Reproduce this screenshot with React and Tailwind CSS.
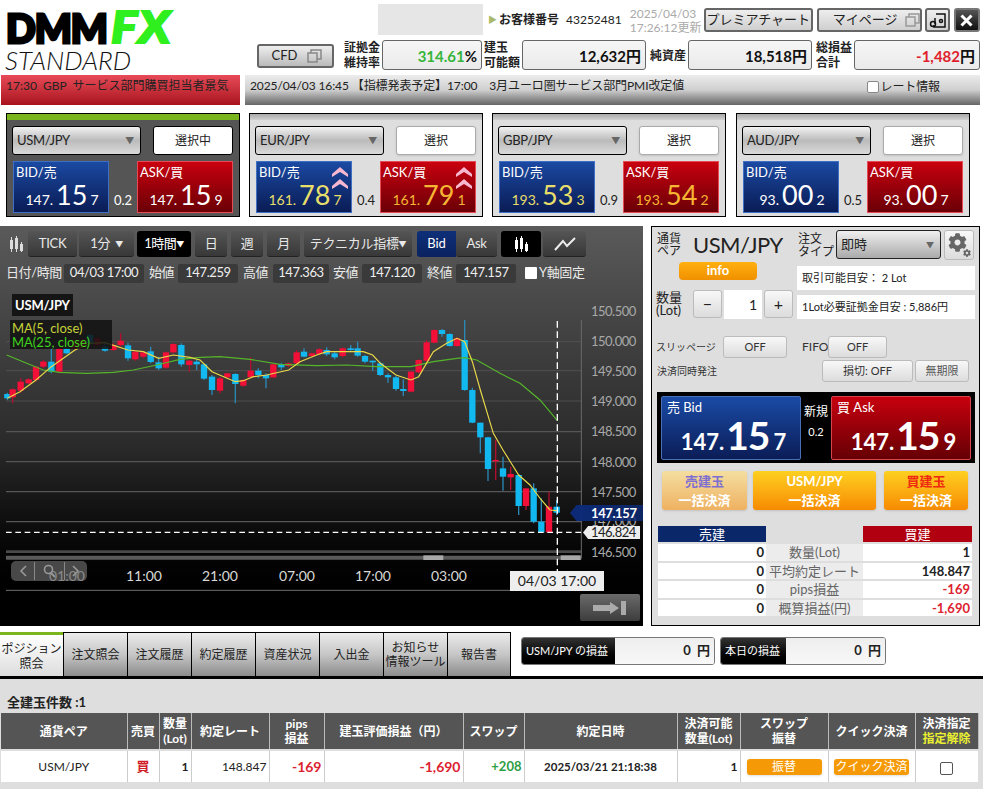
import React from "react";
import { FaCog } from "react-icons/fa";

const FONT = "[font-family:Lato,'Noto_Sans_CJK_JP',sans-serif]";

const candles = [
  [22,218,222,235,240,0],[38,205,208,232,250,1],[62,175,185,212,218,1],[86,175,178,190,192,1],[108,138,140,180,185,1],[130,120,125,140,145,1],
  [154,85,125,155,160,0],[178,80,85,155,160,1],[200,80,85,100,102,0],[225,55,60,85,90,1],[248,55,60,80,85,1],[270,40,45,70,75,0],[292,50,55,75,80,1],
  [315,70,80,92,95,0],[340,70,75,90,92,1],[362,40,62,75,80,1],[384,68,76,115,122,0],[406,92,95,118,122,1],[430,95,97,110,115,1],[452,80,94,126,130,0],
  [476,110,127,145,150,0],[498,95,97,143,146,1],[520,70,72,97,100,1],[544,70,75,133,140,0],[568,120,122,135,155,1],[590,120,125,133,150,0],
  [612,130,133,176,180,0],[636,165,170,210,225,0],[660,170,175,212,220,1],[682,158,160,172,178,1],[706,160,162,192,250,0],[730,178,180,197,200,1],
  [752,112,152,172,175,1],[775,145,152,165,175,0],[798,160,165,175,205,0],[820,130,133,172,175,1],[844,128,132,142,150,0],[866,128,130,138,142,1],
  [890,90,97,130,132,1],[912,85,95,110,112,0],[936,98,100,108,112,1],[958,85,88,102,106,1],[980,82,90,103,108,0],[1004,95,100,112,118,0],
  [1028,82,85,108,112,1],[1052,75,85,90,92,0],[1073,65,85,107,110,0],[1095,105,108,125,130,0],[1118,122,122,127,152,0],[1141,125,130,165,168,0],
  [1164,160,165,172,188,0],[1188,168,172,207,212,0],[1210,178,207,213,228,0],[1233,152,155,215,217,1],[1256,118,120,157,160,1],[1280,60,67,122,125,1],
  [1303,28,30,68,70,1],[1326,27,30,42,50,0],[1349,40,42,78,80,0],[1371,52,55,78,80,1],[1394,-20,60,210,212,0],[1417,203,210,308,310,0],
  [1441,308,308,352,400,0],[1464,350,352,447,483,0],[1487,360,420,424,480,1],[1509,410,445,470,512,0],[1532,440,462,472,510,1],[1556,462,465,558,585,0],
  [1578,505,505,558,570,1],[1601,490,505,605,610,0],[1624,535,605,637,637,0],[1647,515,560,637,637,1],[1670,540,560,578,585,0],
];
const ma5 = "22,235 60,215 108,180 154,140 190,115 225,90 270,70 315,68 384,90 430,95 476,115 520,105 570,112 600,120 636,155 706,185 730,182 760,170 800,165 866,150 900,125 950,105 980,95 1040,95 1090,95 1118,105 1141,130 1188,165 1233,180 1256,170 1300,95 1340,70 1371,55 1394,65 1417,125 1441,210 1480,340 1509,390 1556,465 1590,495 1624,540 1650,570 1670,572";
const ma25 = "20,105 80,130 130,150 178,157 260,160 340,157 400,150 470,135 540,118 600,112 660,110 750,118 840,133 950,137 1040,135 1130,140 1233,140 1300,125 1371,115 1394,113 1430,120 1500,160 1560,190 1620,240 1672,302";

function Chart() {
  return (
    <svg className="absolute left-0 top-[94px]" width="660" height="310" viewBox="0 0 1980 930">
      {[65,152,243,335,425,515,605].map((y) => (
        <line key={y} x1="18" x2="1744" y1={y} y2={y} stroke="#565656" strokeWidth={y > 300 ? 4 : 2.5} />
      ))}
      <line x1="18" x2="1744" y1="695" y2="695" stroke="#4a4a4a" strokeWidth="8" />
      <line x1="18" x2="1744" y1="713" y2="713" stroke="#5a5a5a" strokeWidth="12" />
      <rect x="1270" y="706" width="60" height="14" fill="#a8a8a8" />
      <rect x="1682" y="706" width="60" height="14" fill="#a8a8a8" />
      <line x1="1744" x2="1744" y1="-70" y2="715" stroke="#6a6a6a" strokeWidth="3" />
      <line x1="18" x2="1770" y1="811" y2="811" stroke="#6e6e6e" strokeWidth="3" />
      {candles.map(([x, h, t, b, l, up]) => (
        <g key={x}>
          <line x1={x} x2={x} y1={h} y2={l} stroke={up ? "#b0102e" : "#2b89b8"} strokeWidth="4" />
          <rect x={x - 9.5} y={t} width="19" height={b - t} fill={up ? "#f20f38" : "#12b8f0"} />
        </g>
      ))}
      <polyline points={ma25} fill="none" stroke="#55b52a" strokeWidth="3.5" />
      <polyline points={ma5} fill="none" stroke="#e8d84a" strokeWidth="3.5" />
      <line x1="18" x2="1744" y1="637" y2="637" stroke="#fff" strokeWidth="4" strokeDasharray="17 11" />
      <line x1="1672" x2="1672" y1="-90" y2="755" stroke="#fff" strokeWidth="4" strokeDasharray="20 11" />
    </svg>
  );
}

function Price({ side, label, a, b, c, hi, up }) {
  const blue = side === "bid";
  return (
    <div className={`relative w-[96px] h-[52px] border ${blue ? "border-[#3f6fc4] bg-gradient-to-b from-[#1b4aa3] to-[#0a1c55]" : "border-[#e64a55] bg-gradient-to-b from-[#c9000f] to-[#6b0006]"}`}>
      <div className="pl-[2px] pt-[1px] text-[13px] leading-[18px] text-white">{label}</div>
      <div className={`flex items-baseline justify-center h-[26px] leading-[26px] mt-[1px] pl-[2px] ${hi ? (blue ? "text-[#e8de6a]" : "text-[#f6b533]") : "text-white"}`}>
        <span className="text-[14px]">{a}</span>
        <span className="text-[27px] mx-[3px]">{b}</span>
        <span className="text-[14px]">{c}</span>
      </div>
      {up && (
        <svg className="absolute right-[3px] top-[4px]" width="16" height="24" viewBox="0 0 16 24">
          <path d="M8 1 L16 8 L16 11 L8 6 L0 11 L0 8Z M8 13 L16 20 L16 23 L8 18 L0 23 L0 20Z" fill="#f7b7cf" />
        </svg>
      )}
    </div>
  );
}

function RateCard({ pair, active, hi, up, bid, ask, spread, ml, sel }) {
  return (
    <div className={`w-[234px] h-[104px] border border-black ${ml} ${active ? "bg-[#555]" : "bg-[#dedede]"}`}>
      <div className={active ? "h-[6px] bg-[#7ab51d]" : "h-[6px] bg-gradient-to-b from-[#a8a8a8] to-[#d0d0d0]"}></div>
      <div className="flex justify-between pl-[5px] pr-[6px] mt-[6px]">
        <div className="w-[129px] h-[29px] rounded-[3px] border border-black bg-gradient-to-b from-[#f2f2f2] via-[#bbb] to-[#dadada] flex items-center justify-between pl-[4px] pr-[6px] text-[13px] tracking-[-0.3px] text-[#222]">
          <span>{pair}</span>
          <span className="text-[#666] text-[9px]">▼</span>
        </div>
        <div className={`w-[80px] h-[29px] rounded-[3px] bg-white flex items-center justify-center text-[12px] text-[#222] ${active ? "border border-black" : "border border-[#aaa] shadow-sm"}`}>{sel}</div>
      </div>
      <div className={`flex justify-between pl-[6px] pr-[6px] mt-[6px] ${active ? "text-white" : "text-[#222]"}`}>
        <Price side="bid" label="BID/売" hi={hi} up={up} {...bid} />
        <span className="self-end text-[13px] leading-[26px]">{spread}</span>
        <Price side="ask" label="ASK/買" hi={hi} up={up} {...ask} />
      </div>
    </div>
  );
}

function InfoBox({ w, value, red, green, ml }) {
  return (
    <div className={`${w} ${ml} h-[30px] rounded-[3px] border border-[#666] bg-gradient-to-b from-[#f6f6f6] to-[#eaeaea] flex items-center justify-end pr-[4px] pt-[3px] text-[15px] font-bold text-[#111]`}>
      <span className={red ? "text-[#e01f2d]" : green ? "text-[#35b53a]" : ""}>{value}</span>
      <span>{green ? "%" : "円"}</span>
    </div>
  );
}

function Label({ l1, l2, w }) {
  return (
    <div className={`${w} text-[12px] leading-[15px] font-bold text-[#222] flex flex-col justify-center`}>
      <span>{l1}</span>
      {l2 && <span>{l2}</span>}
    </div>
  );
}

const DARK_BTN = "h-[26px] rounded-[3px] bg-gradient-to-b from-[#555] to-[#383838] border-b border-[#222] text-[#e8e8e8] flex items-center justify-center text-[13px] tracking-[-0.3px]";

function CandleIcon({ c = "#ddd" }) {
  return (
    <svg width="16" height="16" viewBox="0 0 16 16">
      <rect x="2" y="4" width="3" height="9" fill={c} /><rect x="3" y="1" width="1" height="15" fill={c} />
      <rect x="7" y="2" width="3" height="11" fill={c} /><rect x="8" y="0" width="1" height="16" fill={c} />
      <rect x="12" y="8" width="3" height="7" fill={c} /><rect x="13" y="6" width="1" height="10" fill={c} />
    </svg>
  );
}

function Toolbar() {
  return (
    <div className="flex items-center pl-[8px] pt-[5px] h-[31px]">
      <span className="w-[20px]"><CandleIcon /></span>
      <div className={`${DARK_BTN} w-[49px]`}>TICK</div>
      <div className={`${DARK_BTN} w-[55px] ml-[2px]`}>1分&nbsp;<span className="text-[8px] ml-[2px]">▼</span></div>
      <div className="h-[26px] w-[54px] ml-[3px] rounded-[3px] bg-black text-white flex items-center justify-center text-[13px] tracking-[-0.5px]">1時間<span className="text-[8px]">▼</span></div>
      <div className={`${DARK_BTN} w-[32px] ml-[4px]`}>日</div>
      <div className={`${DARK_BTN} w-[32px] ml-[4px]`}>週</div>
      <div className={`${DARK_BTN} w-[33px] ml-[4px]`}>月</div>
      <div className={`${DARK_BTN} w-[108px] ml-[4px]`}>テクニカル指標<span className="text-[8px]">▼</span></div>
      <div className="h-[26px] w-[39px] ml-[5px] rounded-l-[3px] bg-gradient-to-b from-[#0e2f78] to-[#0a2260] text-white flex items-center justify-center text-[13px]">Bid</div>
      <div className={`${DARK_BTN} w-[41px]`}>Ask</div>
      <div className="h-[26px] w-[40px] ml-[4px] rounded-[3px] bg-black flex items-center justify-center"><CandleIcon c="#fff" /></div>
      <div className={`${DARK_BTN} w-[43px] ml-[2px]`}>
        <svg width="22" height="14" viewBox="0 0 22 14"><path d="M1 13 L9 4 L13 9 L21 1" fill="none" stroke="#eee" strokeWidth="2" /></svg>
      </div>
    </div>
  );
}

function Ohlc() {
  const box = "h-[19px] rounded-[2px] bg-[#3a3a3a] text-[#eee] flex items-center justify-center text-[13px] tracking-[-0.4px]";
  const lab = "text-[13px] text-[#e8e8e8] tracking-[-0.4px]";
  return (
    <div className="flex items-center h-[20px] mt-[6px] pl-[6px]">
      <span className={`${lab} w-[58px]`}>日付/時間</span>
      <div className={`${box} w-[80px]`}>04/03 17:00</div>
      <span className={`${lab} w-[29px] ml-[5px]`}>始値</span>
      <div className={`${box} w-[60px]`}>147.259</div>
      <span className={`${lab} w-[30px] ml-[5px]`}>高値</span>
      <div className={`${box} w-[56px]`}>147.363</div>
      <span className={`${lab} w-[29px] ml-[4px]`}>安値</span>
      <div className={`${box} w-[60px]`}>147.120</div>
      <span className={`${lab} w-[29px] ml-[5px]`}>終値</span>
      <div className={`${box} w-[60px]`}>147.157</div>
      <span className="w-[12px] h-[12px] ml-[9px] bg-white rounded-[1px]"></span>
      <span className={`${lab} ml-[2px]`}>Y軸固定</span>
    </div>
  );
}

function ChartPanel() {
  const yLabels = [["150.500","top-[77px]"],["150.000","top-[107px]"],["149.500","top-[137px]"],["149.000","top-[167px]"],["148.500","top-[197px]"],["148.000","top-[228px]"],["147.500","top-[258px]"],["147.000","top-[287px]"],["146.500","top-[318px]"]];
  const xLabels = [["01:00","left-[49px]"],["11:00","left-[126px]"],["21:00","left-[202px]"],["07:00","left-[279px]"],["17:00","left-[355px]"],["03:00","left-[431px]"]];
  return (
    <div className="relative w-[643px] h-[400px] bg-gradient-to-b from-[#5a5a5a] via-[#2a2a2a] via-55% to-[#000] overflow-hidden">
      <Toolbar />
      <Ohlc />
      <Chart />
      <div className="absolute left-[12px] top-[68px] h-[22px] px-[3px] bg-[#151515] text-white text-[13px] font-bold leading-[22px] tracking-[-0.2px]">USM/JPY</div>
      <div className="absolute left-[10px] top-[94px] w-[102px] h-[29px] bg-[#111]/85 text-[13px] leading-[14px] pl-[2px] pt-[1px]">
        <div className="text-[#c6d23a]">MA(5, close)</div>
        <div className="text-[#3fd21e]">MA(25, close)</div>
      </div>
      {yLabels.map(([t, c]) => (
        <div key={t} className={`absolute left-[591px] ${c} text-[13px] tracking-[-0.5px] leading-[16px] text-[#a8a8a8]`}>{t}</div>
      ))}
      {xLabels.map(([t, c]) => (
        <div key={t} className={`absolute ${c} top-[341px] text-[14px] leading-[18px] text-[#d8d8d8]`}>{t}</div>
      ))}
      <div className="absolute left-[11px] top-[335px] w-[76px] h-[20px] rounded-[5px] bg-[#666]/70 flex items-center">
        <span className="w-[23px] flex justify-center">
          <svg width="8" height="12" viewBox="0 0 8 12"><path d="M7 1 L2 6 L7 11" fill="none" stroke="#999" strokeWidth="1.6" /></svg>
        </span>
        <span className="w-[31px] h-[18px] border-x border-[#888] flex items-center justify-center">
          <svg width="13" height="14" viewBox="0 0 13 14"><circle cx="5.5" cy="5.5" r="4" fill="none" stroke="#999" strokeWidth="1.6" /><path d="M8 9 L12 13" stroke="#999" strokeWidth="1.8" /></svg>
        </span>
        <span className="w-[22px] flex justify-center">
          <svg width="8" height="12" viewBox="0 0 8 12"><path d="M1 1 L6 6 L1 11" fill="none" stroke="#999" strokeWidth="1.6" /></svg>
        </span>
      </div>
      <div className="absolute left-[570px] top-[279px] w-[73px] h-[16px] bg-gradient-to-r from-[#0c2a78] to-[#0c2a78]/80 [clip-path:polygon(0_50%,9%_0,100%_0,100%_100%,9%_100%)] text-white font-bold text-[13px] tracking-[-0.4px] leading-[16px] pl-[21px]">147.157</div>
      <div className="absolute left-[583px] top-[300px] w-[57px] h-[13px] bg-[#eee] [clip-path:polygon(0_50%,9%_0,100%_0,100%_100%,9%_100%)] text-[#222] text-[13px] tracking-[-0.5px] leading-[13px] pl-[8px]">146.824</div>
      <div className="absolute left-[510px] top-[345px] w-[94px] h-[20px] bg-[#eee] text-[#222] text-[14px] leading-[20px] text-center">04/03 17:00</div>
      <div className="absolute left-[580px] top-[368px] w-[60px] h-[27px] rounded-[2px] bg-gradient-to-b from-[#6b6b6b] to-[#3d3d3d] flex items-center justify-center">
        <svg width="34" height="14" viewBox="0 0 34 14"><path d="M0 4 H17 V1 L26 7 L17 13 V10 H0Z M28 0 H33 V14 H28Z" fill="#aaa" /></svg>
      </div>
    </div>
  );
}

const GRAY_BTN = "rounded-[3px] border border-[#bbb] bg-gradient-to-b from-[#f8f8f8] to-[#dcdcdc] flex items-center justify-center";

function BigPrice({ side, a, b, c, label }) {
  const blue = side === "bid";
  return (
    <div className={`w-[140px] h-[64px] rounded-[2px] border ${blue ? "border-[#4a6fb8] bg-gradient-to-b from-[#1a4ba6] to-[#0b1d57]" : "border-[#d9454f] bg-gradient-to-b from-[#c8000e] to-[#660005]"}`}>
      <div className="text-[13px] leading-[18px] pl-[5px] pt-[1px] text-white">{label}</div>
      <div className="flex items-baseline justify-center text-white font-bold h-[44px] leading-[38px] pl-[5px]">
        <span className="text-[22px]">{a}</span>
        <span className="text-[39px] mx-[2px] tracking-[-1px]">{b}</span>
        <span className="text-[22px] ml-[2px]">{c}</span>
      </div>
    </div>
  );
}

function OrderPanel() {
  const rows = [["0","数量(Lot)","1",""],["0","平均約定レート","148.847",""],["0","pips損益","-169","r"],["0","概算損益(円)","-1,690","r"]];
  return (
    <div className="w-[329px] h-[400px] border border-black bg-[#dedede] ml-[8px] px-[4px]">
      <div className="flex items-start pt-[3px] h-[33px]">
        <div className="w-[28px] text-[12px] leading-[12px] text-[#222] pt-[3px] ml-[1px]">通貨<br />ペア</div>
        <div className="text-[22px] tracking-[-0.5px] leading-[30px] text-[#222] ml-[8px] w-[105px]">USM/JPY</div>
        <div className="w-[38px] text-[12px] leading-[13px] text-[#222] pt-[2px] whitespace-nowrap">注文<br />タイプ</div>
        <div className="w-[105px] h-[29px] rounded-[3px] border border-[#222] bg-gradient-to-b from-[#f0f0f0] to-[#aaa] flex items-center justify-between pl-[4px] pr-[6px] text-[13px] text-[#222]">即時<span className="text-[8px] text-[#666]">▼</span></div>
        <div className={`${GRAY_BTN} relative w-[30px] h-[30px] ml-[3px]`}>
          <FaCog className="absolute left-[3px] top-[2px] text-[#666]" size={19} />
          <FaCog className="absolute right-[2px] bottom-[2px] text-[#666]" size={8} />
        </div>
      </div>
      <div className="flex mt-[2px]">
        <div className="w-[141px] shrink-0">
          <div className="ml-[23px] w-[78px] h-[18px] rounded-[4px] bg-gradient-to-b from-[#ffb010] to-[#f09000] text-white text-center text-[13px] font-bold leading-[17px]">info</div>
          <div className="flex items-start mt-[10px]">
            <div className="w-[37px] text-[13px] leading-[13px] text-[#222] pt-[1px]">数量<br />(Lot)</div>
            <div className={`${GRAY_BTN} w-[29px] h-[28px] text-[16px] text-[#222]`}>−</div>
            <div className="w-[38px] h-[29px] ml-[2px] bg-white flex items-center justify-end pr-[5px] text-[14px] text-[#222]">1</div>
            <div className={`${GRAY_BTN} w-[29px] h-[28px] ml-[2px] text-[16px] text-[#222]`}>+</div>
          </div>
        </div>
        <div className="w-[178px]">
          <div className="h-[24px] mt-[4px] bg-white pl-[5px] text-[11px] leading-[24px] text-[#222]">取引可能目安： 2 Lot</div>
          <div className="h-[24px] mt-[5px] bg-white pl-[5px] text-[11px] leading-[24px] text-[#222]">1Lot必要証拠金目安 : 5,886円</div>
        </div>
      </div>
      <div className="flex items-center mt-[17px]">
        <span className="w-[67px] text-[10px] text-[#333]">スリッページ</span>
        <div className={`${GRAY_BTN} w-[64px] h-[22px] text-[11px] text-[#333]`}>OFF</div>
        <span className="w-[26px] ml-[15px] text-[12px] text-[#333]">FIFO</span>
        <div className={`${GRAY_BTN} w-[59px] h-[22px] text-[11px] text-[#333]`}>OFF</div>
      </div>
      <div className="flex items-center mt-[2px]">
        <span className="w-[165px] text-[10px] text-[#333] ml-[1px]">決済同時発注</span>
        <div className={`${GRAY_BTN} w-[91px] h-[22px] text-[11px] text-[#333]`}>損切: OFF</div>
        <div className={`${GRAY_BTN} w-[54px] h-[22px] ml-[2px] text-[11px] text-[#555]`}>無期限</div>
      </div>
      <div className="mt-[10px] ml-[1px] w-[318px] h-[71px] bg-black flex items-center pl-[4px]">
        <BigPrice side="bid" label="売 Bid" a="147." b="15" c="7" />
        <div className="w-[30px] self-start mt-[9px] text-center text-white shrink-0">
          <div className="text-[12px] leading-[22px]">新規</div>
          <div className="text-[11px] leading-[18px]">0.2</div>
        </div>
        <BigPrice side="ask" label="買 Ask" a="147." b="15" c="9" />
      </div>
      <div className="flex mt-[8px] ml-[6px] text-center text-[13px] font-bold leading-[19px]">
        <div className="w-[85px] h-[39px] rounded-[3px] bg-gradient-to-b from-[#f4dea0] to-[#eeb160] shadow pt-[1px]">
          <div className="text-[#7e6fd0]">売建玉</div><div className="text-white">一括決済</div>
        </div>
        <div className="w-[123px] h-[39px] ml-[6px] rounded-[3px] bg-gradient-to-b from-[#fdd020] to-[#f68a00] shadow pt-[1px] text-white">
          <div>USM/JPY</div><div>一括決済</div>
        </div>
        <div className="w-[84px] h-[39px] ml-[8px] rounded-[3px] bg-gradient-to-b from-[#fdd020] to-[#f68a00] shadow pt-[1px]">
          <div className="text-[#ee2a10]">買建玉</div><div className="text-white">一括決済</div>
        </div>
      </div>
      <div className="flex mt-[16px] ml-[2px] text-white text-[13px] text-center leading-[16px]">
        <div className="w-[108px] bg-[#0a2869]">売建</div>
        <div className="w-[97px]"></div>
        <div className="w-[109px] bg-[#b10010]">買建</div>
      </div>
      <div className="ml-[2px] mt-[2px] flex flex-col gap-[2px]">
        {rows.map(([l, m, r, c]) => (
          <div key={m} className="flex h-[16.5px] items-center text-[13px]">
            <div className="w-[108px] bg-white h-full text-right pr-[2px] font-bold leading-[16px] text-[#222]">{l}</div>
            <div className="w-[97px] bg-[#ececec] h-full text-center leading-[16px] text-[#666]">{m}</div>
            <div className={`w-[109px] bg-white h-full text-right pr-[2px] font-bold leading-[16px] ${c ? "text-[#dd2230]" : "text-[#222]"}`}>{r}</div>
          </div>
        ))}
      </div>
    </div>
  );
}

function Tabs() {
  const tabs = ["注文照会","注文履歴","約定履歴","資産状況","入出金"];
  const tab = "w-[64px] h-[44px] border-l border-t border-black bg-gradient-to-b from-[#ececec] via-[#c6c6c6] to-[#8c8c8c] flex items-center justify-center text-center text-[12px] leading-[14px] text-[#222] whitespace-nowrap";
  return (
    <div className="flex items-end h-[50px] border-b-[3px] border-black">
      <div className="flex">
        <div className="w-[63px] h-[44px] border-t-[3px] border-[#7ab51d] bg-gradient-to-b from-white to-[#ddd] flex items-center justify-center text-center text-[12px] leading-[15px] text-[#222] whitespace-nowrap">ポジション<br />照会</div>
        {tabs.map((t) => (<div key={t} className={tab}>{t}</div>))}
        <div className={tab}>お知らせ<br />情報ツール</div>
        <div className={`${tab} border-r`}>報告書</div>
      </div>
      <div className="flex self-start mt-[8px]">
        <div className="flex ml-[10px] w-[194px] h-[28px] rounded-[3px] border border-[#777] overflow-hidden">
          <div className="w-[93px] bg-gradient-to-b from-[#333] to-black text-white text-[11px] flex items-center pl-[4px] whitespace-nowrap">USM/JPY の損益</div>
          <div className="flex-1 bg-gradient-to-b from-[#eee] to-[#f8f8f8] flex items-center justify-end pr-[4px] text-[13px] font-bold text-[#222]">0&nbsp;&nbsp;円</div>
        </div>
        <div className="flex ml-[5px] w-[166px] h-[28px] rounded-[3px] border border-[#777] overflow-hidden">
          <div className="w-[65px] bg-gradient-to-b from-[#333] to-black text-white text-[11px] flex items-center pl-[4px] whitespace-nowrap">本日の損益</div>
          <div className="flex-1 bg-gradient-to-b from-[#eee] to-[#f8f8f8] flex items-center justify-end pr-[4px] text-[13px] font-bold text-[#222]">0&nbsp;&nbsp;円</div>
        </div>
      </div>
    </div>
  );
}

function Positions() {
  const th = "border-r border-[#bbb] px-0 text-[12px] leading-[15px] font-bold text-white text-center bg-[#555]";
  const td = "border-r border-[#ccc] text-[12px] text-[#222]";
  return (
    <div className="bg-[#dedede] h-[111px] pl-[1px] pt-[14px]">
      <div className="text-[13px] leading-[18px] font-bold text-[#222] pl-[6px]">全建玉件数 :1</div>
      <table className="w-[977px] table-fixed border-collapse mt-[2px]">
        <colgroup>
          <col className="w-[126px]" /><col className="w-[32px]" /><col className="w-[32px]" /><col className="w-[78px]" /><col className="w-[55px]" /><col className="w-[139px]" /><col className="w-[61px]" /><col className="w-[153px]" /><col className="w-[63px]" /><col className="w-[88px]" /><col className="w-[87px]" /><col className="w-[63px]" />
        </colgroup>
        <thead>
          <tr className="h-[37px] border-b-2 border-[#dedede]">
            <th className={th}>通貨ペア</th>
            <th className={th}>売買</th>
            <th className={th}>数量<br />(Lot)</th>
            <th className={th}>約定レート</th>
            <th className={th}>pips<br />損益</th>
            <th className={th}>建玉評価損益（円）</th>
            <th className={th}>スワップ</th>
            <th className={th}>約定日時</th>
            <th className={th}>決済可能<br />数量(Lot)</th>
            <th className={th}>スワップ<br />振替</th>
            <th className={th}>クイック決済</th>
            <th className={th}>決済指定<br /><span className="text-[#eaf030]">指定解除</span></th>
          </tr>
        </thead>
        <tbody>
          <tr className="h-[32px] bg-white">
            <td className={`${td} text-center`}>USM/JPY</td>
            <td className={`${td} text-center font-bold !text-[13px] !text-[#d01f2b]`}>買</td>
            <td className={`${td} text-right font-bold pr-[2px]`}>1</td>
            <td className={`${td} text-right pr-[2px]`}>148.847</td>
            <td className={`${td} text-right font-bold pr-[2px] !text-[14px] !text-[#dd2230]`}>-169</td>
            <td className={`${td} text-right font-bold pr-[2px] !text-[14px] !text-[#dd2230]`}>-1,690</td>
            <td className={`${td} text-right font-bold pr-[2px] !text-[13px] !text-[#2e9e44]`}>+208</td>
            <td className={`${td} text-center font-bold !text-[11.5px]`}>2025/03/21 21:18:38</td>
            <td className={`${td} text-right pr-[2px] font-bold`}>1</td>
            <td className={td}>
              <div className="mx-auto w-[75px] h-[16px] rounded-[3px] bg-[#f59a06] text-white text-[12px] leading-[15px] text-center shadow">振替</div>
            </td>
            <td className={td}>
              <div className="mx-auto w-[75px] h-[16px] rounded-[3px] bg-[#f59a06] text-white text-[12px] leading-[15px] text-center shadow whitespace-nowrap">クイック決済</div>
            </td>
            <td className="text-center">
              <span className="inline-block w-[13px] h-[13px] rounded-[2px] border border-[#555] bg-white align-middle"></span>
            </td>
          </tr>
        </tbody>
      </table>
    </div>
  );
}

function Header() {
  return (
    <div className="flex h-[75px]">
      <div className="w-[257px] shrink-0 pl-[5px]">
        <div className="flex items-end h-[48px] leading-none">
          <span className="text-[39px] font-black text-black [-webkit-text-stroke:3px_black] tracking-[-1px] ml-[1px]">DMM</span>
          <span className="text-[43px] font-black italic text-[#2ff01e] [-webkit-text-stroke:2px_#2ff01e] ml-[4px] tracking-[1px] origin-left scale-x-[1.15]">FX</span>
        </div>
        <div className="text-[26px] leading-[25px] font-light italic text-[#111]">STANDARD</div>
      </div>
      <div className="flex-1 min-w-0">
        <div className="flex h-[35px] items-start">
          <div className="ml-[121px] mt-[4px] w-[105px] h-[31px] bg-[#e6e6e6]"></div>
          <span className="ml-[5px] mt-[14px] text-[9px] leading-[12px] text-[#a9b86a]">▶</span>
          <span className="ml-[2px] mt-[12px] text-[12px] leading-[16px] font-bold text-[#222]">お客様番号</span>
          <span className="ml-[7px] mt-[12px] text-[12px] leading-[16px] text-[#222]">43252481</span>
          <div className="ml-[8px] mt-[7px] w-[72px] text-[12px] leading-[14px] text-[#aaa]">2025/04/03<br />17:26:12更新</div>
          <div className="ml-[2px] mt-[8px] w-[109px] h-[24px] rounded-[3px] border-2 border-[#666] bg-gradient-to-b from-[#eee] to-[#cfcfcf] flex items-center justify-center text-[13px] text-[#222] whitespace-nowrap">プレミアチャート</div>
          <div className="ml-[4px] mt-[8px] w-[105px] h-[24px] rounded-[3px] border-2 border-[#666] bg-gradient-to-b from-[#eee] to-[#cfcfcf] flex items-center justify-center text-[13px] text-[#222]">
            <span className="ml-[14px]">マイページ</span>
            <svg className="ml-[7px]" width="15" height="14" viewBox="0 0 15 14" fill="none" stroke="#999" strokeWidth="1.5"><rect x="1" y="4" width="9" height="9" /><path d="M4 4V1h10v9h-4" /></svg>
          </div>
          <div className="ml-[3px] mt-[8px] w-[25px] h-[24px] rounded-[3px] border-2 border-[#666] bg-gradient-to-b from-[#eee] to-[#cfcfcf] flex items-center justify-center">
            <svg width="17" height="17" viewBox="0 0 17 17" fill="none" stroke="#111" strokeWidth="1.5"><path d="M7 2h9v13H5v-2" /><circle cx="4" cy="12" r="2.5" /><circle cx="12" cy="9" r="1.5" /><path d="M6 12V6" /></svg>
          </div>
          <div className="ml-[4px] mt-[8px] w-[26px] h-[24px] rounded-[3px] border-2 border-[#777] bg-gradient-to-b from-[#555] to-[#111] flex items-center justify-center">
            <svg width="13" height="13" viewBox="0 0 13 13"><path d="M1.5 1.5 L11.5 11.5 M11.5 1.5 L1.5 11.5" stroke="#fff" strokeWidth="3" /></svg>
          </div>
        </div>
        <div className="flex h-[40px] items-start">
          <div className="mt-[9px] w-[77px] h-[24px] rounded-[3px] border-2 border-[#666] bg-gradient-to-b from-[#eee] to-[#bbb] flex items-center justify-center text-[13px] text-[#222]">
            <span className="ml-[3px]">CFD</span>
            <svg className="ml-[10px]" width="15" height="14" viewBox="0 0 15 14" fill="none" stroke="#888" strokeWidth="1.5"><rect x="1" y="4" width="9" height="9" /><path d="M4 4V1h10v9h-4" /></svg>
          </div>
          <div className="flex h-[30px] mt-[5px]">
            <Label w="w-[38px] ml-[10px]" l1="証拠金" l2="維持率" />
            <InfoBox w="w-[100px]" value="314.61" green />
            <Label w="w-[38px] ml-[2px]" l1="建玉" l2="可能額" />
            <InfoBox w="w-[124px]" value="12,632" />
            <Label w="w-[38px] ml-[4px]" l1="純資産" />
            <InfoBox w="w-[124px]" value="18,518" />
            <Label w="w-[38px] ml-[4px]" l1="総損益" l2="合計" />
            <InfoBox w="w-[126px]" value="-1,482" red />
          </div>
        </div>
      </div>
    </div>
  );
}

export default function App() {
  return (
    <div className={`w-[983px] h-[789px] overflow-hidden bg-white ${FONT}`}>
      <Header />
      <div className="flex h-[30px] pl-[1px]">
        <div className="w-[239px] bg-gradient-to-b from-[#e84a58] to-[#a9101c] text-[#222] text-[12px] pl-[5px] leading-[22px] whitespace-nowrap">17:30&nbsp;&nbsp;GBP&nbsp;&nbsp;サービス部門購買担当者景気</div>
        <div className="w-[735px] ml-[5px] bg-gradient-to-b from-[#ececec] via-[#cfcfcf] to-[#666] text-[#222] text-[12px] pl-[5px] leading-[22px] flex whitespace-nowrap tracking-[-0.1px]">
          <span>2025/04/03 16:45 【指標発表予定】17:00　3月ユーロ圏サービス部門PMI改定値</span>
          <span className="ml-auto mr-[40px] flex items-center h-[24px]"><span className="w-[12px] h-[12px] bg-white border border-[#888] rounded-[2px] mr-[1px]"></span>レート情報</span>
        </div>
      </div>
      <div className="flex mt-[8px] pl-[6px]">
        <RateCard pair="USM/JPY" active sel="選択中" spread="0.2" bid={{a:"147.",b:"15",c:"7"}} ask={{a:"147.",b:"15",c:"9"}} ml="" />
        <RateCard pair="EUR/JPY" hi up sel="選択" spread="0.4" bid={{a:"161.",b:"78",c:"7"}} ask={{a:"161.",b:"79",c:"1"}} ml="ml-[9px]" />
        <RateCard pair="GBP/JPY" hi sel="選択" spread="0.9" bid={{a:"193.",b:"53",c:"3"}} ask={{a:"193.",b:"54",c:"2"}} ml="ml-[9px]" />
        <RateCard pair="AUD/JPY" sel="選択" spread="0.5" bid={{a:"93.",b:"00",c:"2"}} ask={{a:"93.",b:"00",c:"7"}} ml="ml-[10px]" />
      </div>
      <div className="flex mt-[9px]">
        <ChartPanel />
        <OrderPanel />
      </div>
      <div className="mt-[3px]">
        <Tabs />
        <Positions />
      </div>
    </div>
  );
}
